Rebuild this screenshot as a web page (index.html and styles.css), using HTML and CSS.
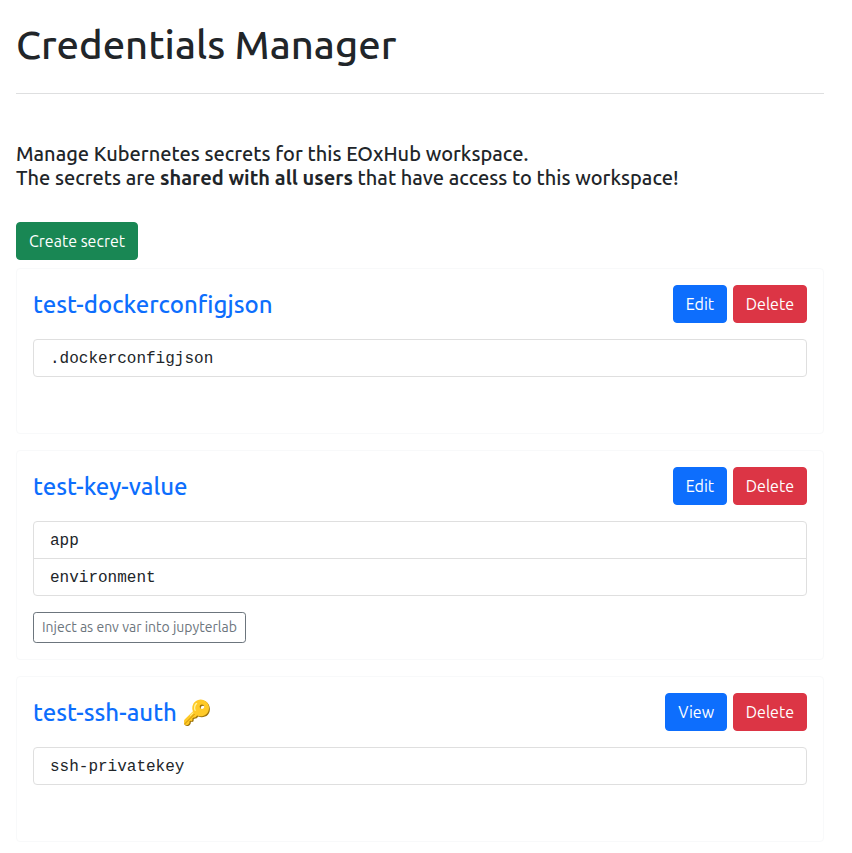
FILE: index.html
```
<!DOCTYPE html>
<html lang="en">
<head>
<meta charset="utf-8">
<title>Credentials Manager</title>
<link rel="stylesheet" href="styles.css">
</head>
<body>
<main class="page">
  <h1>Credentials Manager</h1>
  <hr>
  <p class="lead">Manage Kubernetes secrets for this EOxHub workspace.<br>The secrets are <strong>shared with all users</strong> that have access to this workspace!</p>
  <button class="btn btn-success">Create secret</button>
  <section class="card">
    <header class="card-head">
      <h2>test-dockerconfigjson</h2>
      <div class="actions"><button class="btn btn-primary">Edit</button><button class="btn btn-danger">Delete</button></div>
    </header>
    <ul class="keys"><li>.dockerconfigjson</li></ul>
  </section>
  <section class="card card-tall">
    <header class="card-head">
      <h2>test-key-value</h2>
      <div class="actions"><button class="btn btn-primary">Edit</button><button class="btn btn-danger">Delete</button></div>
    </header>
    <ul class="keys"><li>app</li><li>environment</li></ul>
    <button class="btn btn-outline">Inject as env var into jupyterlab</button>
  </section>
  <section class="card">
    <header class="card-head">
      <h2>test-ssh-auth 🔑</h2>
      <div class="actions"><button class="btn btn-primary">View</button><button class="btn btn-danger">Delete</button></div>
    </header>
    <ul class="keys"><li>ssh-privatekey</li></ul>
  </section>
</main>
</body>
</html>
```
FILE: styles.css
```
* { box-sizing: border-box; }
body {
  margin: 0;
  background: #fff;
  color: #212529;
  font: 400 16px/24px Ubuntu, "Noto Sans", sans-serif;
}
.page { width: 840px; padding: 21px 16px 0; }
h1, h2, p, ul { margin: 0; padding: 0; }
h1 { font-size: 40px; line-height: 48px; font-weight: 500; }
hr { height: 1px; margin: 24px 0 48px; border: 0; background: #dedfe0; }
.lead { margin-bottom: 32px; font-size: 20px; line-height: 24px; font-weight: 500; letter-spacing: 0.012px; }
.lead strong { font-weight: 700; }
.btn {
  display: block;
  height: 38px;
  padding: 6px 12px;
  border: 1px solid transparent;
  border-radius: 4px;
  color: #fff;
  font: inherit;
  white-space: nowrap;
}
.btn-success { margin-bottom: 8px; background: #198754; border-color: #198754; }
.btn-primary { background: #0d6efd; border-color: #0d6efd; }
.btn-danger { background: #dc3545; border-color: #dc3545; }
.btn-outline {
  height: 31px;
  margin-top: 16px;
  padding: 4px 8px;
  border-color: #6c757d;
  border-radius: 3.2px;
  background: transparent;
  color: #6c757d;
  font-size: 14px;
  line-height: 21px;
}
.card {
  height: 166px;
  margin-bottom: 16px;
  padding: 16px;
  border: 1px solid #f8f9fa;
  border-radius: 4px;
}
.card-tall { height: 210px; }
.card-head { display: flex; justify-content: space-between; align-items: center; height: 38px; margin-bottom: 16px; }
h2 { font-size: 24px; line-height: 29px; font-weight: 500; color: #0d6efd; }
.actions { display: flex; gap: 5.7px; }
.keys { border: 1px solid #dfdfdf; border-radius: 4px; list-style: none; }
.keys li { height: 36px; padding: 7px 16px 5px; font: 16px/24px "Liberation Mono", monospace; }
.keys li + li { height: 37px; border-top: 1px solid #dfdfdf; }
```
